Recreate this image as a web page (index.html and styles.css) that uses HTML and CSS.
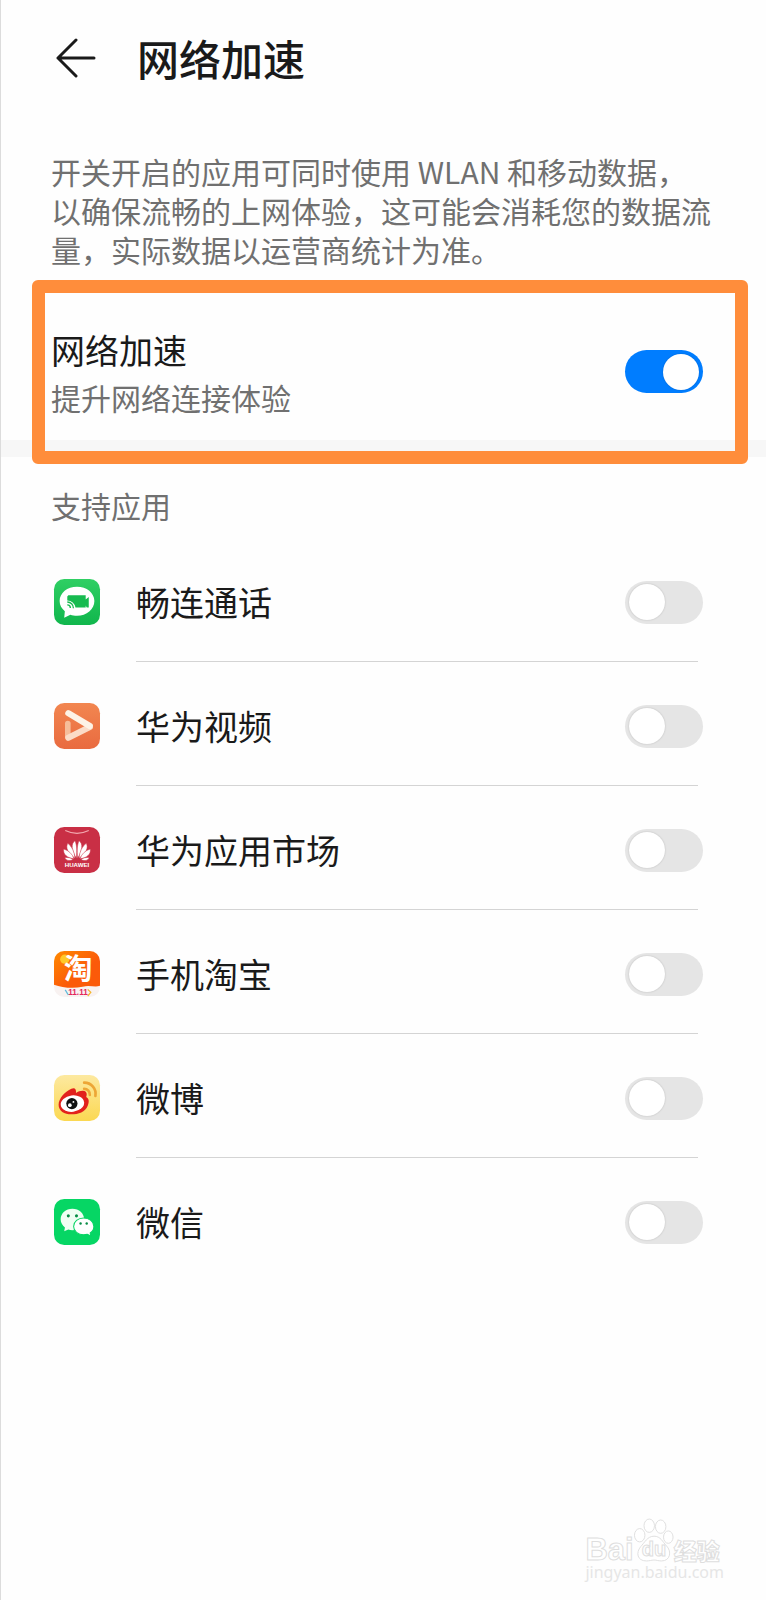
FILE: index.html
```html
<!DOCTYPE html>
<html lang="zh-CN">
<head>
  <meta charset="UTF-8">
  <meta name="viewport" content="width=device-width, initial-scale=1">
  <title>网络加速</title>
  <link rel="stylesheet" href="styles.css">
</head>
<body>
  <header>
    <button class="back" aria-label="返回">
      <svg width="40" height="40" viewBox="0 0 40 40" fill="none" stroke="#1a1a1a" stroke-width="3" stroke-linecap="round" stroke-linejoin="round">
        <path d="M38 20H2M20 2L2 20l18 18"/>
      </svg>
    </button>
    <h1>网络加速</h1>
  </header>

  <p class="desc">开关开启的应用可同时使用 WLAN 和移动数据，以确保流畅的上网体验，这可能会消耗您的数据流量，实际数据以运营商统计为准。</p>

  <div class="main-switch">
    <label for="boost">
      <span class="name">网络加速</span>
      <span class="sub">提升网络连接体验</span>
    </label>
    <input type="checkbox" class="switch" id="boost" checked>
  </div>
  <div class="band"></div>

  <h2>支持应用</h2>
  <ul class="apps">
    <li>
      <svg class="icon" viewBox="0 0 45 45">
        <defs><linearGradient id="g1" x2="0" y2="1"><stop stop-color="#2fcf63"/><stop offset="1" stop-color="#10b64c"/></linearGradient></defs>
        <rect width="45" height="45" rx="10" fill="url(#g1)"/>
        <path d="M22.500 7.500C32 7.500 39.500 13.500 39.500 21.500S32 36 22.500 36c-2.500 0-4.500-.3-6.500-1l-6 3 .6-6.500C7.500 29 5.500 25.500 5.500 21.500c0-8 7.500-14 17-14z" fill="#fff"/>
        <path d="M14 16h17v4l3-2.500V28h-2l-1-2v2H21a8 8 0 0 0-8-7v-4z" fill="#17bb50"/>
        <path d="M13 22.500a6 6 0 0 1 6 6M13 25.300a3 3 0 0 1 3 3" fill="none" stroke="#17bb50" stroke-width="1.300"/>
      </svg>
      <label for="app1">畅连通话</label>
      <input type="checkbox" class="switch" id="app1">
    </li>
    <li>
      <svg class="icon" viewBox="0 0 45 45">
        <defs>
          <linearGradient id="g2" x2="0" y2="1"><stop stop-color="#f28650"/><stop offset="1" stop-color="#e96b40"/></linearGradient>
        </defs>
        <rect width="45" height="45" rx="10" fill="url(#g2)"/>
        <path d="M13.500 20v13" stroke="#f6bd9a" stroke-width="5.500" stroke-linecap="round"/>
        <path d="M14 34L35 23.500" stroke="#fbdcc7" stroke-width="6" stroke-linecap="round"/>
        <path d="M14 10L35 22.500" stroke="#fdf3e6" stroke-width="6" stroke-linecap="round"/>
      </svg>
      <label for="app2">华为视频</label>
      <input type="checkbox" class="switch" id="app2">
    </li>
    <li>
      <svg class="icon" viewBox="0 0 45 45">
        <rect width="45" height="45" rx="10" fill="#c92f45"/>
        <path d="M11 3.500q11.500 5.500 23 0" fill="none" stroke="#f3a9b0" stroke-width="1.100"/>
        <g fill="#fff" stroke="#c92f45" stroke-width=".5">
          <path d="M21.900 30.500C17 23 16.500 16 20.500 13.500c1.800 4 2.200 9 1.400 17zM23.100 30.500C28 23 28.500 16 24.500 13.500c-1.800 4-2.200 9-1.400 17z"/>
          <path d="M20.500 30.500C13.500 26 11 20 13.500 16c4 3 6.500 8 7 14.500zM24.500 30.500C31.500 26 34 20 31.500 16c-4 3-6.500 8-7 14.500z"/>
          <path d="M19.500 31C13 30.500 8.500 26.500 9.500 21.500c5 1.500 8.500 5 10 9.500zM25.500 31C32 30.500 36.500 26.500 35.500 21.500c-5 1.500-8.500 5-10 9.500z"/>
          <path d="M18.500 32c-3.500 1.500-6.500 1-8-2 3-.5 6 0 8 2zM26.500 32c3.500 1.500 6.500 1 8-2-3-.5-6 0-8 2z"/>
        </g>
        <text x="22.500" y="39" class="huawei">HUAWEI</text>
      </svg>
      <label for="app3">华为应用市场</label>
      <input type="checkbox" class="switch" id="app3">
    </li>
    <li>
      <svg class="icon" viewBox="0 0 45 45">
        <defs>
          <linearGradient id="g4" x2="1" y2="1"><stop stop-color="#ff8a00"/><stop offset=".6" stop-color="#fb5a09"/></linearGradient>
          <clipPath id="c4"><rect width="45" height="45" rx="10"/></clipPath>
        </defs>
        <g clip-path="url(#c4)">
          <rect width="45" height="45" fill="#f8f2f1"/>
          <path d="M0 0h45v34c-5 2-10-1-17 1-9 2-20 1-28-2z" fill="url(#g4)"/>
          <circle cx="10.500" cy="8" r="4.500" fill="#ffc928"/>
          <path d="M11 38l3 5" stroke="#5eb9dc" stroke-width="1.200"/>
          <path d="M33 44l3-3.500-3-3" fill="none" stroke="#f5b62d" stroke-width="1.200"/>
        </g>
        <text x="23.500" y="27" class="tao">淘</text>
        <text x="23.500" y="43" class="sale">11.11</text>
      </svg>
      <label for="app4">手机淘宝</label>
      <input type="checkbox" class="switch" id="app4">
    </li>
    <li>
      <svg class="icon" viewBox="0 0 45 45">
        <defs><linearGradient id="g5" x2="0" y2="1"><stop stop-color="#fde9a0"/><stop offset="1" stop-color="#fbd852"/></linearGradient></defs>
        <rect width="45" height="45" rx="10" fill="url(#g5)"/>
        <path d="M17 13.500c3-1.500 5 0 4.500 4 3-2 7.500-3 9.500-1 1.500 1.500 1 3.500.5 5 3 1.500 3 5 1.500 8.500-2.500 6-9 8.500-16 8.500C10 38.500 4.500 35 4.500 29 4.500 23 11 16 17 13.500z" fill="#e2211c"/>
        <ellipse cx="18" cy="28" rx="11.500" ry="8" fill="#fff" transform="rotate(-7 18 28)"/>
        <circle cx="17.500" cy="28" r="5.500" fill="#111"/>
        <circle cx="15.500" cy="29.500" r="1.800" fill="#fff"/>
        <circle cx="19" cy="26.300" r=".9" fill="#fff"/>
        <path d="M29.500 7.500a11 11 0 0 1 11 13M29.500 13.500a5.500 5.500 0 0 1 5.500 6" fill="none" stroke="#eda636" stroke-width="2.600" stroke-linecap="round"/>
      </svg>
      <label for="app5">微博</label>
      <input type="checkbox" class="switch" id="app5">
    </li>
    <li>
      <svg class="icon" viewBox="0 0 45 45">
        <rect width="45" height="45" rx="10" fill="#06d664"/>
        <path d="M18 9.500c6.500 0 11.500 4.500 11.500 10.300S24.500 30.500 18 30.500c-1.500 0-2.800-.2-4-.6L10 31.500l.7-3.700C8.200 25.900 6.500 23 6.500 19.800 6.500 14 11.500 9.500 18 9.500z" fill="#effff3"/>
        <path d="M29 18.500c5.500 0 10 3.800 10 8.300 0 2.600-1.400 4.900-3.600 6.400l.6 3-3.400-1.700c-1.100.3-2.400.5-3.600.5-5.500 0-9.800-3.700-9.800-8.200s4.300-8.300 9.800-8.300z" fill="#fff" stroke="#06d664"/>
        <g fill="#078c45"><circle cx="14" cy="16.500" r="1.500"/><circle cx="22" cy="16.500" r="1.500"/><circle cx="26" cy="24" r="1.200"/><circle cx="32" cy="24" r="1.200"/></g>
      </svg>
      <label for="app6">微信</label>
      <input type="checkbox" class="switch" id="app6">
    </li>
  </ul>

  <footer>
    <div class="brand">
      <span class="bai">Bai</span>
      <span class="paw">
        <svg width="40" height="44" viewBox="0 0 42 46" fill="#fff" stroke="#dedede">
          <ellipse cx="6" cy="18" rx="5.500" ry="7"/>
          <ellipse cx="16" cy="8" rx="5.500" ry="7"/>
          <ellipse cx="28" cy="9" rx="5.500" ry="7"/>
          <ellipse cx="36" cy="20" rx="5" ry="6.500"/>
          <path d="M21 19c7 0 9 6 13 10 6 6 4 16-5 16-4 0-5-1-8-1s-4 1-8 1C3 45 2 36 7 30c4-4 7-11 14-11z"/>
        </svg>
        <span class="du">du</span>
      </span>
      <span class="jy">经验</span>
    </div>
    <div class="site">jingyan.baidu.com</div>
  </footer>
</body>
</html>
```

FILE: styles.css
```css
* { box-sizing: border-box; }
body {
  display: flex;
  flex-direction: column;
  min-height: 100vh;
  margin: 0;
  border-left: 1px solid #dcdcdc;
  background: #fefefe;
  color: #1a1a1a;
  font-family: "Noto Sans CJK SC", sans-serif;
}
header {
  display: flex;
  align-items: center;
  gap: 41px;
  height: 115px;
  padding-left: 55px;
}
.back {
  width: 40px;
  height: 40px;
  padding: 0;
  border: none;
  background: none;
  cursor: pointer;
}
.back svg { display: block; }
h1 {
  margin: 0;
  font-size: 42px;
  line-height: 60px;
  font-weight: 500;
}
.desc {
  margin: 37px 53px 0 50px;
  font-size: 30px;
  line-height: 39px;
  color: #707070;
}

/* main switch with the orange frame round it */
.main-switch {
  position: relative;
  display: flex;
  align-items: center;
  justify-content: space-between;
  height: 171px;
  padding: 34px 63px 0 50px;
}
.main-switch::after {
  content: "";
  position: absolute;
  inset: 11px 18px -24px 31px;
  border: 13px solid #ff8d3b;
  border-radius: 6px;
  pointer-events: none;
}
.name, .sub { display: block; }
.name {
  font-size: 34px;
  line-height: 50px;
}
.sub {
  font-size: 30px;
  line-height: 44px;
  color: #707070;
}
.band {
  height: 17px;
  background: #f7f7f7;
}

.switch {
  appearance: none;
  flex: none;
  display: flex;
  align-items: center;
  width: 78px;
  height: 43px;
  margin: 0;
  padding: 0 4px;
  border-radius: 22px;
  background: #e5e5e5;
  cursor: pointer;
}
.switch::before {
  content: "";
  width: 36px;
  height: 36px;
  border-radius: 50%;
  background: #fff;
  box-shadow: 0 0 2px rgba(0, 0, 0, 0.2);
}
.switch:checked {
  justify-content: flex-end;
  background: #007dff;
}

h2 {
  margin: 26px 50px 0;
  font-size: 30px;
  line-height: 44px;
  font-weight: 400;
  color: #707070;
}
.apps {
  margin: 11px 0 0;
  padding: 0 63px 0 53px;
  list-style: none;
}
.apps li {
  position: relative;
  display: flex;
  align-items: center;
  height: 124px;
  padding-top: 4px;
}
.apps li:not(:last-child)::after {
  content: "";
  position: absolute;
  right: 5px;
  bottom: 0;
  left: 82px;
  height: 1px;
  background: #d4d4d4;
}
.apps label {
  flex: 1;
  margin-left: 36px;
  font-size: 34px;
  line-height: 50px;
}
.icon {
  width: 46px;
  height: 46px;
  overflow: visible;
}
.huawei, .tao, .sale { text-anchor: middle; }
.huawei {
  font: bold 6px "Liberation Sans", sans-serif;
  fill: #fff;
}
.tao {
  font-size: 28px;
  font-weight: bold;
  fill: #fff;
}
.sale {
  font: bold 8px "Liberation Sans", sans-serif;
  fill: #e3265c;
}

footer {
  align-self: flex-end;
  margin: auto 42px 20px 0;
  color: #fff;
}
.brand {
  display: flex;
  align-items: flex-end;
  white-space: nowrap;
  -webkit-text-stroke: 1px #dedede;
}
.bai {
  font: bold 31px/28px "Liberation Sans", sans-serif;
}
.paw {
  position: relative;
  padding-bottom: 2px;
}
.paw svg { display: block; }
.du {
  position: absolute;
  bottom: 3px;
  left: 8px;
  font: bold 20px/24px "Liberation Sans", sans-serif;
}
.jy {
  font-size: 23px;
  line-height: 28px;
  font-weight: 900;
}
.site {
  font: 16px/16px "Noto Sans", sans-serif;
  color: #e6e6e6;
}
```
